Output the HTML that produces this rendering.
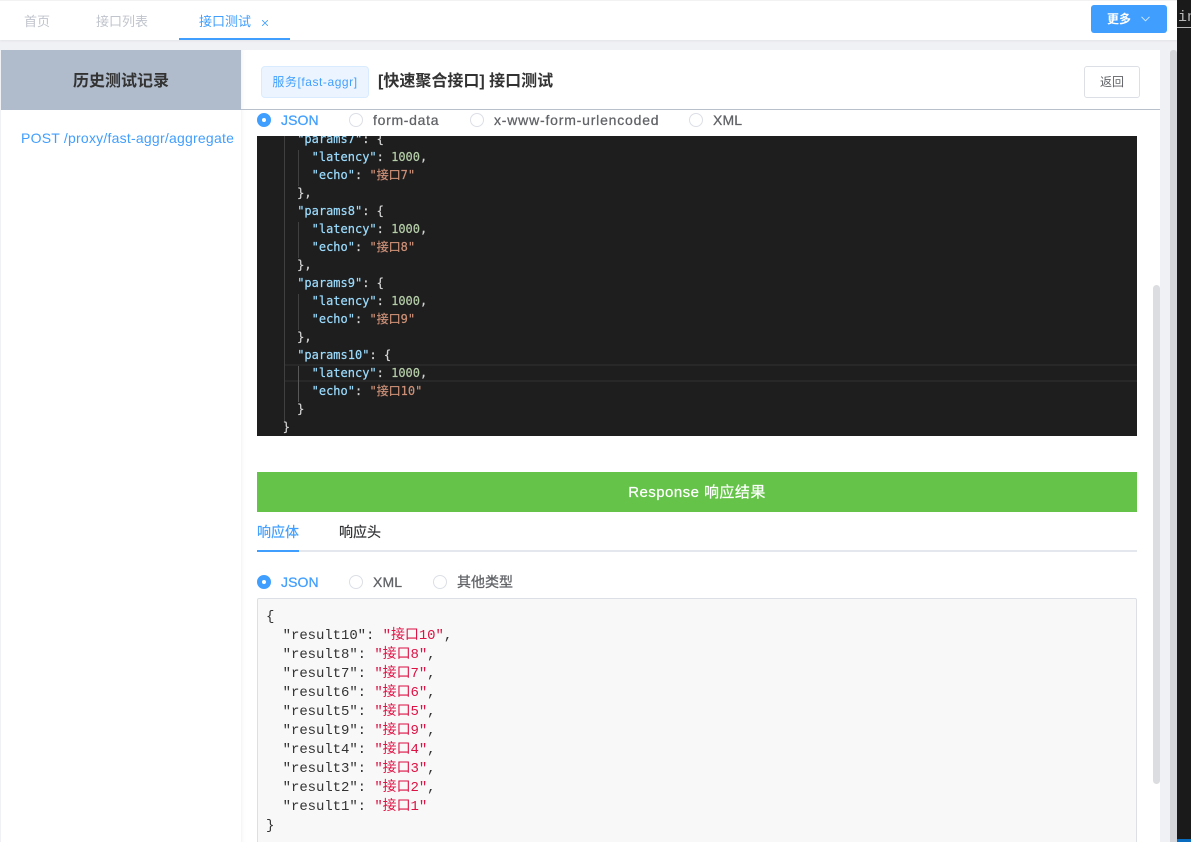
<!DOCTYPE html>
<html><head><meta charset="utf-8">
<style>
*{box-sizing:border-box}
html,body{margin:0;padding:0;width:1191px;height:842px;overflow:hidden;background:#f0f1f5;font-family:"Liberation Sans","Noto Sans CJK SC",sans-serif}
div,span.a{position:absolute}
#root{left:0;top:0;width:1191px;height:842px;overflow:hidden;background:#f0f1f5}
.t{white-space:nowrap;line-height:20px}
.r{width:14px;height:14px;border-radius:50%;border:1px solid #dcdfe6;background:#fff}
.r.on{background:#409eff;border-color:#409eff}
.r.on:after{content:"";position:absolute;left:4px;top:4px;width:4px;height:4px;border-radius:50%;background:#fff}
.lb{font-size:14px;font-weight:400;color:#606266;-webkit-text-stroke:.25px;letter-spacing:.1px}
.lb.on{color:#409eff}
.code{font-family:"DejaVu Sans Mono","Noto Sans CJK SC",monospace;font-size:12px;line-height:18px;white-space:pre;color:#d4d4d4;left:0;-webkit-text-stroke:.2px}
.k{color:#9cdcfe}.n{color:#b5cea8}.s{color:#ce9178}
.res{font-family:"Liberation Mono","Noto Sans CJK SC",monospace;font-size:14px;line-height:19px;white-space:pre;color:#333;letter-spacing:-.07px}
.res b{font-weight:400;color:#dd1144}
</style></head><body>
<div id="root">
<!-- top bar -->
<div style="left:0;top:0;width:1177px;height:40px;background:#fff;border-top:1px solid #f2f2f2;box-shadow:0 1px 2px rgba(0,0,0,.06)"></div>
<div class="t" style="left:24px;top:12px;font-size:13px;color:#c0c4cc">首页</div>
<div class="t" style="left:96px;top:12px;font-size:13px;color:#c0c4cc">接口列表</div>
<div class="t" style="left:199px;top:12px;font-size:13px;color:#409eff">接口测试</div>
<svg style="position:absolute;left:262px;top:20px" width="6" height="6" viewBox="0 0 6 6"><path d="M0 0L6 6M6 0L0 6" stroke="#409eff" stroke-width=".8" fill="none"/></svg>
<div style="left:179px;top:38px;width:111px;height:2px;background:#409eff"></div>
<div style="left:1091px;top:5px;width:76px;height:28px;background:#409eff;border-radius:3px"></div>
<div class="t" style="left:1107px;top:9px;font-size:12px;font-weight:700;color:#fff">更多</div>
<svg style="position:absolute;left:1141px;top:16px" width="9" height="6" viewBox="0 0 9 6"><path d="M.5 .8L4.5 4.8L8.5 .8" stroke="#cfe6ff" stroke-width="1" fill="none"/></svg>
<!-- dark right -->
<div style="left:1177px;top:0;width:14px;height:842px;background:#1a1a1a;overflow:hidden">
<div class="t" style="left:1px;top:8px;font:15px/20px 'Liberation Mono',monospace;color:#b8b8b8">in</div>
<div style="left:0;top:27px;width:14px;height:1px;background:#b8b8b8"></div>
<div style="left:0;top:839px;width:14px;height:3px;background:#0a6cbf"></div>
</div>
<div style="left:1170px;top:50px;width:7px;height:792px;background:#d5d6da;border-radius:3px 3px 0 0"></div>
<!-- left panel -->
<div style="left:1px;top:50px;width:240px;height:792px;background:#fff"></div>
<div style="left:1px;top:50px;width:240px;height:60px;background:#b0bccc"></div>
<div class="t" style="left:1px;top:72px;width:240px;text-align:center;font-size:16px;font-weight:700;color:#333">历史测试记录</div>
<div class="t" style="left:21px;top:128px;font-size:14px;color:#409eff;letter-spacing:.23px">POST /proxy/fast-aggr/aggregate</div>
<!-- main -->
<div style="left:241px;top:50px;width:919px;height:792px;background:#fff;box-shadow:inset 6px 0 6px -6px rgba(0,0,0,.08)"></div>
<div style="left:241px;top:109px;width:919px;height:1px;background:#b8c0cc"></div>
<div class="t" style="left:261px;top:66px;width:108px;height:32px;line-height:30px;text-align:center;font-size:12px;letter-spacing:.55px;color:#409eff;background:#ecf5ff;border:1px solid #d9ecff;border-radius:4px">服务[fast-aggr]</div>
<div class="t" style="left:378px;top:72px;font-size:16px;font-weight:700;color:#333">[快速聚合接口] 接口测试</div>
<div class="t" style="left:1084px;top:66px;width:56px;height:32px;line-height:30px;text-align:center;font-size:12px;color:#606266;background:#fff;border:1px solid #dcdfe6;border-radius:3px">返回</div>
<!-- request radios -->
<div class="r on" style="left:257px;top:113px"></div><div class="t lb on" style="left:281px;top:110px">JSON</div>
<div class="r" style="left:349px;top:113px"></div><div class="t lb" style="left:373px;top:110px;letter-spacing:.7px">form-data</div>
<div class="r" style="left:470px;top:113px"></div><div class="t lb" style="left:494px;top:110px;letter-spacing:.8px">x-www-form-urlencoded</div>
<div class="r" style="left:689px;top:113px"></div><div class="t lb" style="left:713px;top:110px">XML</div>
<!-- editor -->
<div style="left:257px;top:136px;width:880px;height:300px;background:#1e1e1e;overflow:hidden">
<div style="left:27px;top:228px;width:853px;height:18px;border:solid #282828;border-width:2px 0"></div>
<div style="left:27px;top:0;width:1px;height:285px;background:#404040"></div>
<div style="left:41px;top:14px;width:1px;height:36px;background:#404040"></div>
<div style="left:41px;top:86px;width:1px;height:36px;background:#404040"></div>
<div style="left:41px;top:158px;width:1px;height:36px;background:#404040"></div>
<div style="left:41px;top:230px;width:1px;height:36px;background:#585858"></div>
<div class="code" style="left:18.5px;top:-6px">   <span class="k">"params7"</span>: {
     <span class="k">"latency"</span>: <span class="n">1000</span>,
     <span class="k">"echo"</span>: <span class="s">"接口7"</span>
   },
   <span class="k">"params8"</span>: {
     <span class="k">"latency"</span>: <span class="n">1000</span>,
     <span class="k">"echo"</span>: <span class="s">"接口8"</span>
   },
   <span class="k">"params9"</span>: {
     <span class="k">"latency"</span>: <span class="n">1000</span>,
     <span class="k">"echo"</span>: <span class="s">"接口9"</span>
   },
   <span class="k">"params10"</span>: {
     <span class="k">"latency"</span>: <span class="n">1000</span>,
     <span class="k">"echo"</span>: <span class="s">"接口10"</span>
   }
 }</div>
</div>
<!-- response -->
<div class="t" style="left:257px;top:472px;width:880px;height:40px;line-height:42px;background:#65c34a;color:#fff;font-size:15px;letter-spacing:.45px;text-align:center;-webkit-text-stroke:.2px">Response 响应结果</div>
<div class="t" style="left:257px;top:522px;font-size:14px;color:#409eff;-webkit-text-stroke:.2px">响应体</div>
<div class="t" style="left:339px;top:522px;font-size:14px;color:#303133;-webkit-text-stroke:.2px">响应头</div>
<div style="left:257px;top:550px;width:880px;height:2px;background:#e4e7ed"></div>
<div style="left:257px;top:550px;width:42px;height:2px;background:#409eff"></div>
<div class="r on" style="left:257px;top:575px"></div><div class="t lb on" style="left:281px;top:572px">JSON</div>
<div class="r" style="left:349px;top:575px"></div><div class="t lb" style="left:373px;top:572px">XML</div>
<div class="r" style="left:433px;top:575px"></div><div class="t lb" style="left:457px;top:572px;letter-spacing:0">其他类型</div>
<div style="left:257px;top:598px;width:880px;height:260px;background:#f8f8f8;border:1px solid #dcdfe6;border-radius:2px"></div>
<div class="res" style="left:266px;top:608px">{
  "result10": <b>"接口10"</b>,
  "result8": <b>"接口8"</b>,
  "result7": <b>"接口7"</b>,
  "result6": <b>"接口6"</b>,
  "result5": <b>"接口5"</b>,
  "result9": <b>"接口9"</b>,
  "result4": <b>"接口4"</b>,
  "result3": <b>"接口3"</b>,
  "result2": <b>"接口2"</b>,
  "result1": <b>"接口1"</b>
}</div>
<!-- scrollbar -->
<div style="left:1153px;top:285px;width:7px;height:499px;background:#dcdde0;border-radius:4px"></div>
</div>
</body></html>
